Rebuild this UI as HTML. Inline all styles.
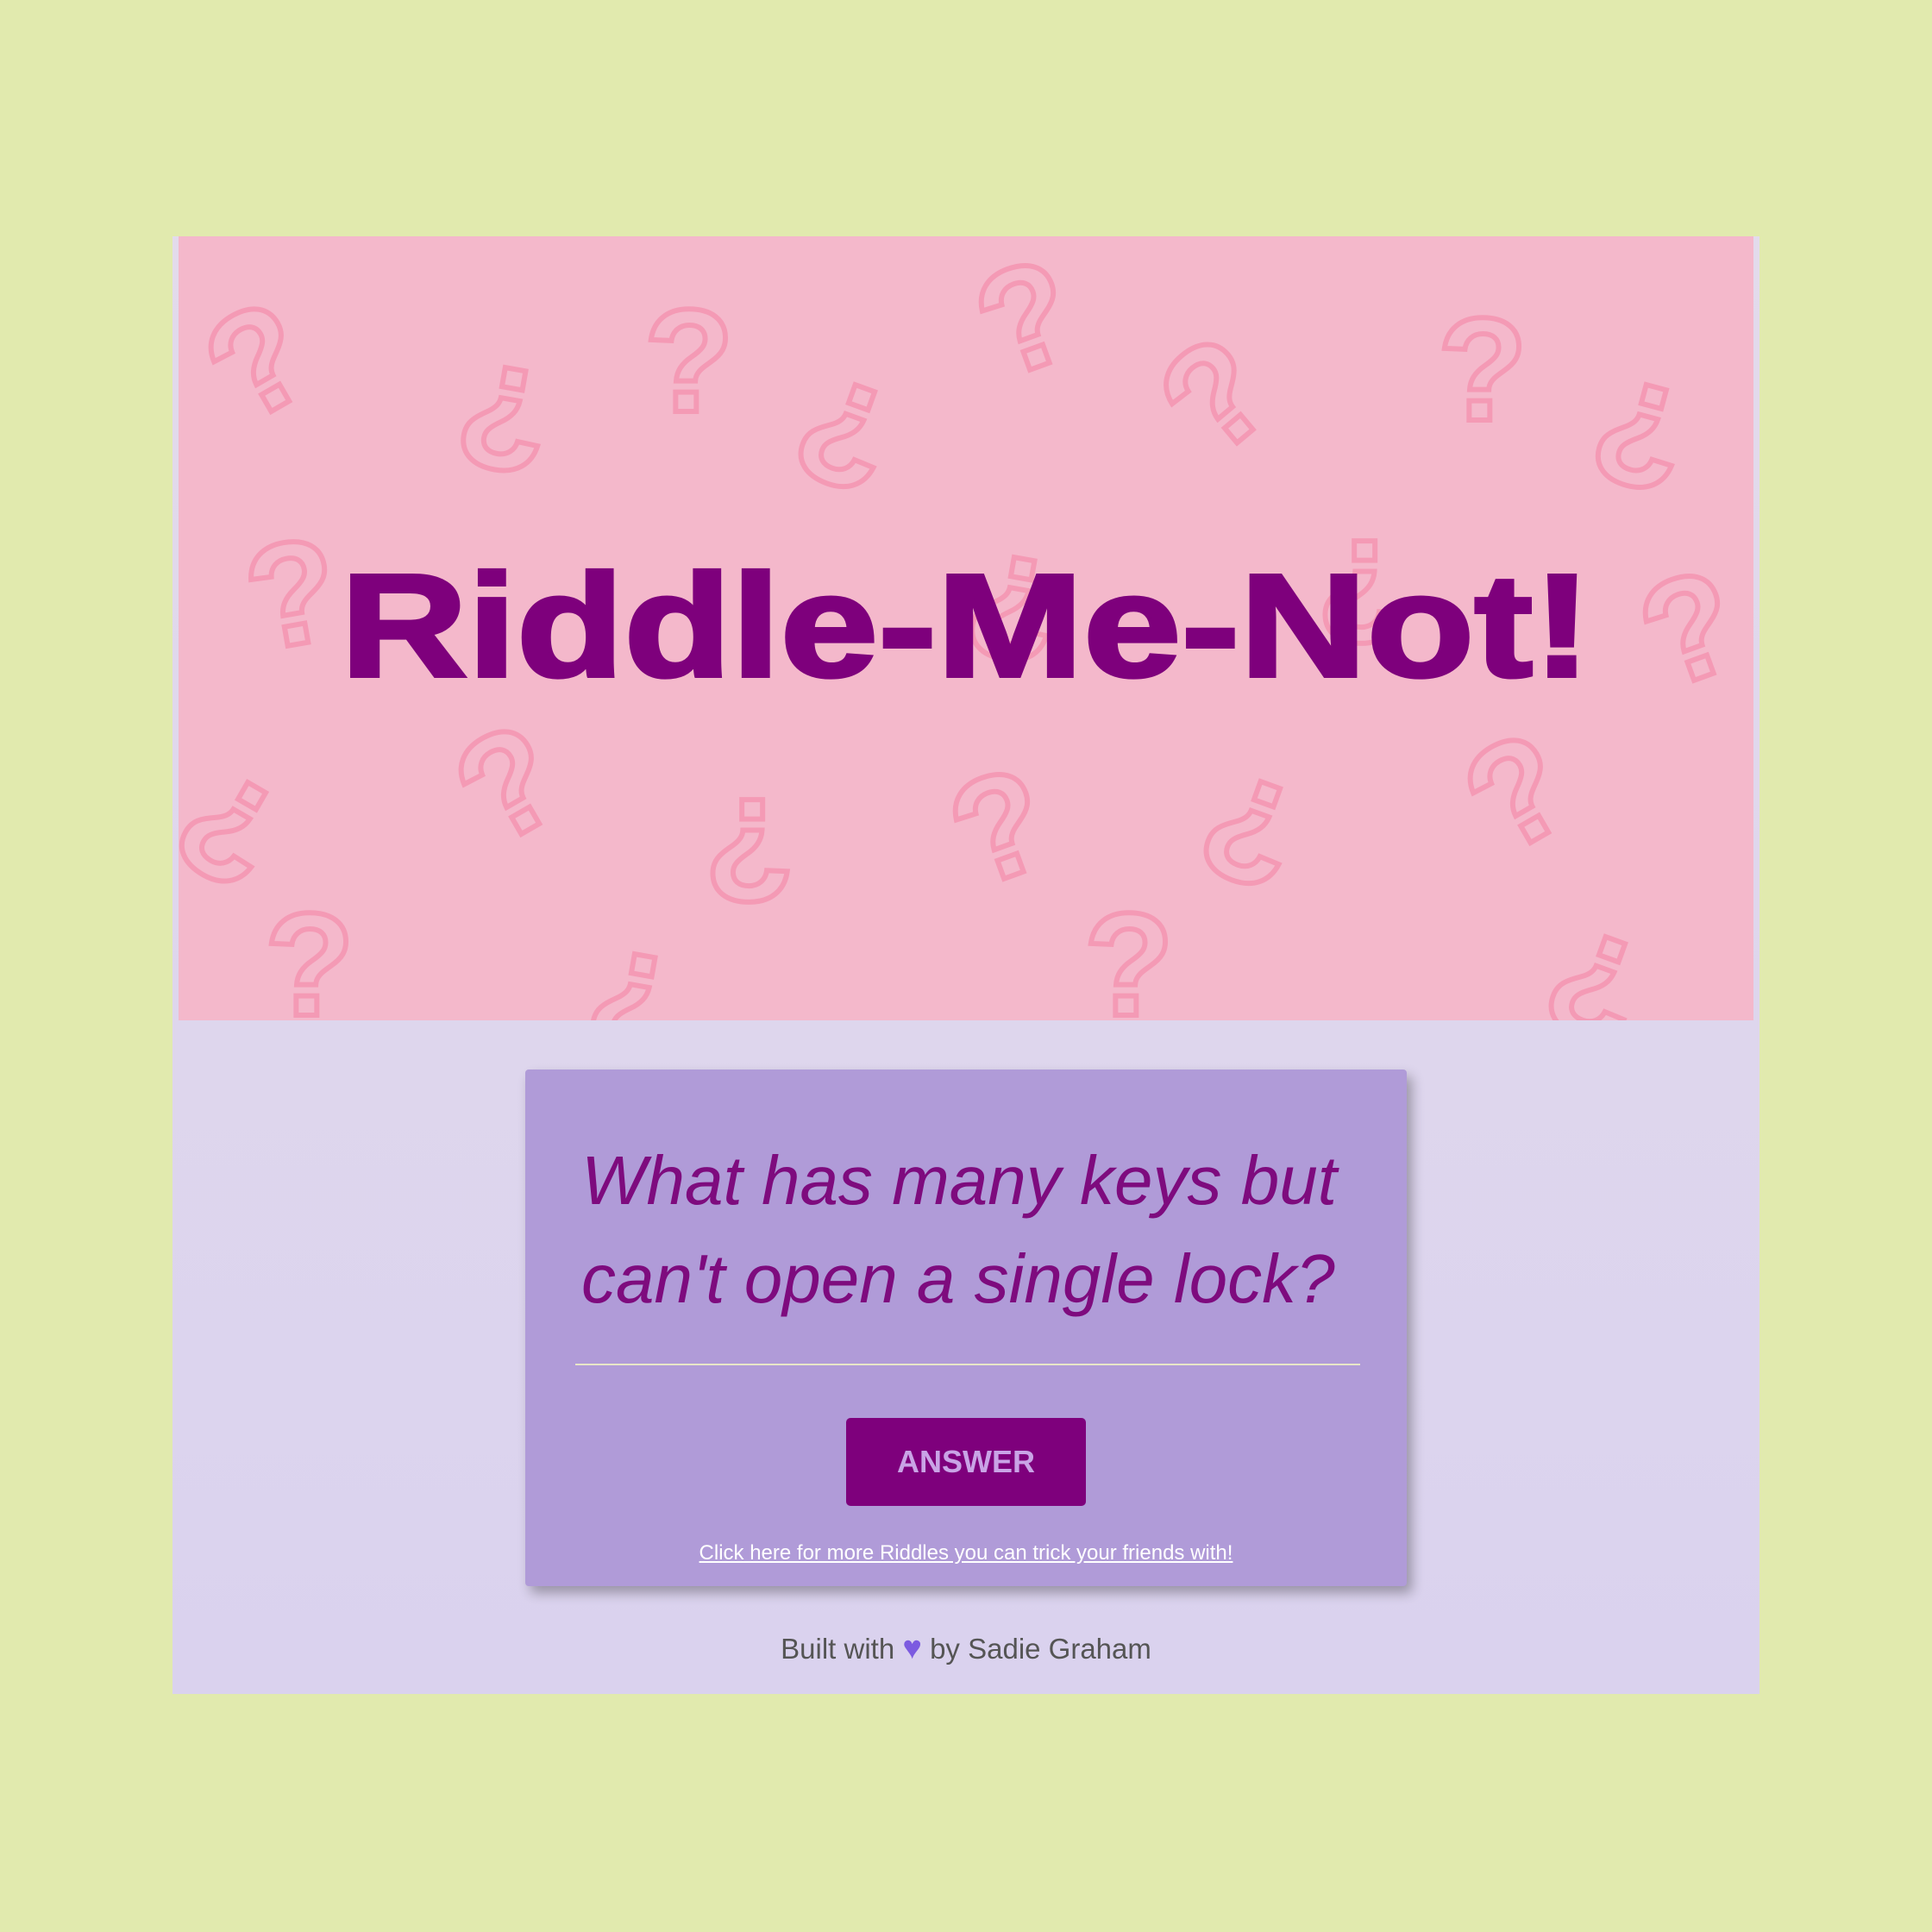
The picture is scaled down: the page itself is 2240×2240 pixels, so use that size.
<!DOCTYPE html>
<html><head><meta charset="utf-8">
<style>
html,body{margin:0;padding:0;}
body{width:2240px;height:2240px;background:#e1eaae;position:relative;overflow:hidden;font-family:"Liberation Sans",sans-serif;}
#wrap{position:absolute;left:200px;top:274px;width:1840px;height:1690px;background:linear-gradient(#e3dbec,#dad2ee);}
#banner{position:absolute;left:7px;top:0;width:1826px;height:909px;background:#f4b8cb;overflow:hidden;}
.q{position:absolute;font-family:"Liberation Sans",sans-serif;font-weight:bold;color:transparent;-webkit-text-stroke:6px #f49ab5;font-size:170px;line-height:1;}
h1{position:absolute;left:0;right:0;top:367px;margin:0;text-align:center;font-size:170px;font-weight:bold;color:#7e007c;line-height:1;letter-spacing:0;-webkit-text-stroke:4px #7e007c;transform:scaleX(1.2);}
#card{position:absolute;left:409px;top:966px;width:1022px;height:599px;background:#b09bd8;border-radius:4px;box-shadow:6px 8px 14px rgba(0,0,0,.3);}
#qtext{position:absolute;left:65px;top:72px;width:960px;font-style:italic;font-size:80px;line-height:114px;color:#7e0b7e;}
#hr{position:absolute;left:58px;top:341px;width:910px;height:2px;background:#e8e6c8;}
#btn{position:absolute;left:372px;top:404px;width:278px;height:102px;background:#7e007c;border-radius:5px;color:#c9a4e6;font-weight:bold;font-size:36px;text-align:center;line-height:102px;}
#link{position:absolute;left:0;right:0;top:547px;text-align:center;font-size:24px;color:#fff;text-decoration:underline;}
#foot{position:absolute;left:0;right:0;top:1616px;text-align:center;font-size:33px;color:#555;}
</style></head><body>
<div id="wrap">
<div id="banner">
<div class="q" style="left:40px;top:60px;transform:rotate(-30deg)">?</div>
<div class="q" style="left:330px;top:100px;transform:rotate(10deg)">¿</div>
<div class="q" style="left:540px;top:60px">?</div>
<div class="q" style="left:730px;top:120px;transform:rotate(20deg)">¿</div>
<div class="q" style="left:930px;top:10px;transform:rotate(-20deg)">?</div>
<div class="q" style="left:1150px;top:100px;transform:rotate(-40deg)">?</div>
<div class="q" style="left:1460px;top:70px">?</div>
<div class="q" style="left:1650px;top:120px;transform:rotate(15deg)">¿</div>
<div class="q" style="left:80px;top:330px;transform:rotate(-10deg)">?</div>
<div class="q" style="left:920px;top:320px;transform:rotate(10deg)">¿</div>
<div class="q" style="left:1320px;top:300px">¿</div>
<div class="q" style="left:1700px;top:370px;transform:rotate(-20deg)">?</div>
<div class="q" style="left:20px;top:580px;transform:rotate(30deg)">¿</div>
<div class="q" style="left:330px;top:550px;transform:rotate(-30deg)">?</div>
<div class="q" style="left:610px;top:600px">¿</div>
<div class="q" style="left:900px;top:600px;transform:rotate(-20deg)">?</div>
<div class="q" style="left:1200px;top:580px;transform:rotate(20deg)">¿</div>
<div class="q" style="left:1500px;top:560px;transform:rotate(-30deg)">?</div>
<div class="q" style="left:100px;top:760px">?</div>
<div class="q" style="left:480px;top:780px;transform:rotate(10deg)">¿</div>
<div class="q" style="left:1050px;top:760px">?</div>
<div class="q" style="left:1600px;top:760px;transform:rotate(20deg)">¿</div>
<h1>Riddle-Me-Not!</h1>
</div>
<div id="card">
<div id="qtext">What has many keys but can't open a single lock?</div>
<div id="hr"></div>
<div id="btn">ANSWER</div>
<div id="link">Click here for more Riddles you can trick your friends with!</div>
</div>
<div id="foot">Built with <span style="color:#7c5be0;font-size:38px">&#9829;</span> by Sadie Graham</div>
</div>
</body></html>
